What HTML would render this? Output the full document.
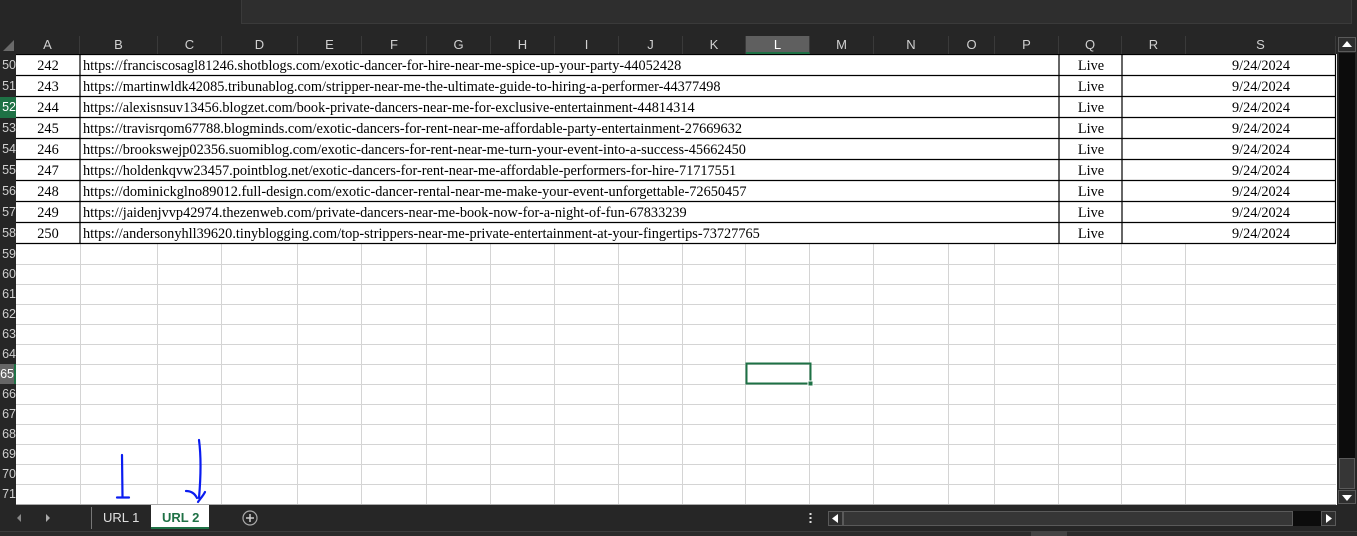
<!DOCTYPE html>
<html><head><meta charset="utf-8"><style>
*{margin:0;padding:0;box-sizing:border-box}
body{width:1357px;height:536px;background:#262626;position:relative;overflow:hidden;font-family:"Liberation Sans",sans-serif}
.a{position:absolute}
.ch{position:absolute;top:36px;height:18px;color:#d0d0d0;font-size:13px;text-align:center;line-height:18px;border-right:1px solid #3a3a3a}
.rh{position:absolute;left:0;width:16px;color:#d0d0d0;font-size:12.5px;text-align:right;overflow:hidden;white-space:nowrap;height:20px;line-height:20px}
.r2{height:21px;line-height:21px}
.d{position:absolute;font-family:"Liberation Serif",serif;font-size:14.3px;color:#000;white-space:nowrap;line-height:21px;height:21px}
.n{left:16px;width:64px;text-align:center}
.u{left:83px}
.q{left:1059px;width:64px;text-align:center}
.s{left:1186px;width:150px;text-align:center}
</style></head><body>
<div class="a" style="left:241px;top:0;width:1111px;height:24px;background:#2e2e2e;border:1px solid #3a3a3a;border-top:none"></div>
<svg class="a" style="left:2px;top:40px" width="14" height="12"><polygon points="12,0 12,11 1,11" fill="#6a6a6a"/></svg>
<div class="ch" style="left:16px;width:64px">A</div>
<div class="ch" style="left:80px;width:78px">B</div>
<div class="ch" style="left:158px;width:64px">C</div>
<div class="ch" style="left:222px;width:76px">D</div>
<div class="ch" style="left:298px;width:64px">E</div>
<div class="ch" style="left:362px;width:65px">F</div>
<div class="ch" style="left:427px;width:64px">G</div>
<div class="ch" style="left:491px;width:64px">H</div>
<div class="ch" style="left:555px;width:64px">I</div>
<div class="ch" style="left:619px;width:64px">J</div>
<div class="ch" style="left:683px;width:63px">K</div>
<div class="ch" style="left:746px;width:64px;background:#5f5f5f;color:#fff;border-bottom:2px solid #1e7145">L</div>
<div class="ch" style="left:810px;width:64px">M</div>
<div class="ch" style="left:874px;width:75px">N</div>
<div class="ch" style="left:949px;width:46px">O</div>
<div class="ch" style="left:995px;width:64px">P</div>
<div class="ch" style="left:1059px;width:63px">Q</div>
<div class="ch" style="left:1122px;width:64px">R</div>
<div class="ch" style="left:1186px;width:150px">S</div>

<svg class="a" style="left:16px;top:54px" width="1321" height="451">
<rect x="0" y="0" width="1321" height="451" fill="#fff"/>
<g stroke="#d4d4d4" stroke-width="1">
<line x1="0" y1="210.5" x2="1320" y2="210.5"/><line x1="0" y1="230.5" x2="1320" y2="230.5"/><line x1="0" y1="250.5" x2="1320" y2="250.5"/><line x1="0" y1="270.5" x2="1320" y2="270.5"/><line x1="0" y1="290.5" x2="1320" y2="290.5"/><line x1="0" y1="310.5" x2="1320" y2="310.5"/><line x1="0" y1="330.5" x2="1320" y2="330.5"/><line x1="0" y1="350.5" x2="1320" y2="350.5"/><line x1="0" y1="370.5" x2="1320" y2="370.5"/><line x1="0" y1="390.5" x2="1320" y2="390.5"/><line x1="0" y1="410.5" x2="1320" y2="410.5"/><line x1="0" y1="430.5" x2="1320" y2="430.5"/>
<line x1="64.5" y1="190" x2="64.5" y2="450"/><line x1="141.5" y1="0" x2="141.5" y2="450"/><line x1="205.5" y1="0" x2="205.5" y2="450"/><line x1="281.5" y1="0" x2="281.5" y2="450"/><line x1="345.5" y1="0" x2="345.5" y2="450"/><line x1="410.5" y1="0" x2="410.5" y2="450"/><line x1="474.5" y1="0" x2="474.5" y2="450"/><line x1="538.5" y1="0" x2="538.5" y2="450"/><line x1="602.5" y1="0" x2="602.5" y2="450"/><line x1="666.5" y1="0" x2="666.5" y2="450"/><line x1="729.5" y1="0" x2="729.5" y2="450"/><line x1="793.5" y1="0" x2="793.5" y2="450"/><line x1="857.5" y1="0" x2="857.5" y2="450"/><line x1="932.5" y1="0" x2="932.5" y2="450"/><line x1="978.5" y1="0" x2="978.5" y2="450"/><line x1="1042.5" y1="190" x2="1042.5" y2="450"/><line x1="1105.5" y1="190" x2="1105.5" y2="450"/><line x1="1169.5" y1="0" x2="1169.5" y2="450"/>
<line x1="0" y1="450.5" x2="1320" y2="450.5" stroke="#aaa"/>
</g>
<rect x="0" y="0" width="1320" height="190" fill="#fff"/>
<g stroke="#000" stroke-width="1.2">
<line x1="0" y1="0.5" x2="1320" y2="0.5"/><line x1="0" y1="21.5" x2="1320" y2="21.5"/><line x1="0" y1="42.5" x2="1320" y2="42.5"/><line x1="0" y1="63.5" x2="1320" y2="63.5"/><line x1="0" y1="84.5" x2="1320" y2="84.5"/><line x1="0" y1="105.5" x2="1320" y2="105.5"/><line x1="0" y1="126.5" x2="1320" y2="126.5"/><line x1="0" y1="147.5" x2="1320" y2="147.5"/><line x1="0" y1="168.5" x2="1320" y2="168.5"/><line x1="0" y1="189.5" x2="1320" y2="189.5"/>
<line x1="64" y1="0" x2="64" y2="190"/><line x1="1043" y1="0" x2="1043" y2="190"/><line x1="1106" y1="0" x2="1106" y2="190"/><line x1="1319.5" y1="0" x2="1319.5" y2="190"/>
</g>
<rect x="730.5" y="309.5" width="64" height="20" fill="none" stroke="#1e7145" stroke-width="2"/>
<rect x="792" y="327" width="5" height="5" fill="#1e7145" stroke="#fff" stroke-width="1"/>
</svg>

<div class="rh r2" style="top:55px">50</div>
<div class="rh r2" style="top:76px">51</div>
<div class="rh r2" style="top:97px;background:#1e7145;color:#fff">52</div>
<div class="rh r2" style="top:118px">53</div>
<div class="rh r2" style="top:139px">54</div>
<div class="rh r2" style="top:160px">55</div>
<div class="rh r2" style="top:181px">56</div>
<div class="rh r2" style="top:202px">57</div>
<div class="rh r2" style="top:223px">58</div>
<div class="rh" style="top:244px">59</div>
<div class="rh" style="top:264px">60</div>
<div class="rh" style="top:284px">61</div>
<div class="rh" style="top:304px">62</div>
<div class="rh" style="top:324px">63</div>
<div class="rh" style="top:344px">64</div>
<div class="rh" style="top:364px;background:#666;color:#fff;border-right:2px solid #1e7145">65</div>
<div class="rh" style="top:384px">66</div>
<div class="rh" style="top:404px">67</div>
<div class="rh" style="top:424px">68</div>
<div class="rh" style="top:444px">69</div>
<div class="rh" style="top:464px">70</div>
<div class="rh" style="top:484px">71</div>

<div class="d n" style="top:56px">242</div><div class="d u" style="top:56px">https://franciscosagl81246.shotblogs.com/exotic-dancer-for-hire-near-me-spice-up-your-party-44052428</div><div class="d q" style="top:56px">Live</div><div class="d s" style="top:56px">9/24/2024</div>
<div class="d n" style="top:77px">243</div><div class="d u" style="top:77px">https://martinwldk42085.tribunablog.com/stripper-near-me-the-ultimate-guide-to-hiring-a-performer-44377498</div><div class="d q" style="top:77px">Live</div><div class="d s" style="top:77px">9/24/2024</div>
<div class="d n" style="top:98px">244</div><div class="d u" style="top:98px">https://alexisnsuv13456.blogzet.com/book-private-dancers-near-me-for-exclusive-entertainment-44814314</div><div class="d q" style="top:98px">Live</div><div class="d s" style="top:98px">9/24/2024</div>
<div class="d n" style="top:119px">245</div><div class="d u" style="top:119px">https://travisrqom67788.blogminds.com/exotic-dancers-for-rent-near-me-affordable-party-entertainment-27669632</div><div class="d q" style="top:119px">Live</div><div class="d s" style="top:119px">9/24/2024</div>
<div class="d n" style="top:140px">246</div><div class="d u" style="top:140px">https://brookswejp02356.suomiblog.com/exotic-dancers-for-rent-near-me-turn-your-event-into-a-success-45662450</div><div class="d q" style="top:140px">Live</div><div class="d s" style="top:140px">9/24/2024</div>
<div class="d n" style="top:161px">247</div><div class="d u" style="top:161px">https://holdenkqvw23457.pointblog.net/exotic-dancers-for-rent-near-me-affordable-performers-for-hire-71717551</div><div class="d q" style="top:161px">Live</div><div class="d s" style="top:161px">9/24/2024</div>
<div class="d n" style="top:182px">248</div><div class="d u" style="top:182px">https://dominickglno89012.full-design.com/exotic-dancer-rental-near-me-make-your-event-unforgettable-72650457</div><div class="d q" style="top:182px">Live</div><div class="d s" style="top:182px">9/24/2024</div>
<div class="d n" style="top:203px">249</div><div class="d u" style="top:203px">https://jaidenjvvp42974.thezenweb.com/private-dancers-near-me-book-now-for-a-night-of-fun-67833239</div><div class="d q" style="top:203px">Live</div><div class="d s" style="top:203px">9/24/2024</div>
<div class="d n" style="top:224px">250</div><div class="d u" style="top:224px">https://andersonyhll39620.tinyblogging.com/top-strippers-near-me-private-entertainment-at-your-fingertips-73727765</div><div class="d q" style="top:224px">Live</div><div class="d s" style="top:224px">9/24/2024</div>

<div class="a" style="left:1337px;top:36px;width:20px;height:468px;background:#262626"></div>
<div class="a" style="left:1338px;top:37px;width:18px;height:15px;border:1px solid #5a5a5a;background:#2e2e2e"></div>
<svg class="a" style="left:1342px;top:41px" width="10" height="6"><polygon points="5,0 10,6 0,6" fill="#fff"/></svg>
<div class="a" style="left:1339px;top:53px;width:16px;height:405px;background:#0c0c0c"></div>
<div class="a" style="left:1339px;top:458px;width:16px;height:31px;background:#363636;border:1px solid #5a5a5a"></div>
<div class="a" style="left:1338px;top:490px;width:18px;height:14px;border:1px solid #5a5a5a;background:#2e2e2e"></div>
<svg class="a" style="left:1342px;top:495px" width="10" height="6"><polygon points="0,0 10,0 5,6" fill="#fff"/></svg>

<div class="a" style="left:0;top:505px;width:1357px;height:26px;background:#262626"></div>
<div class="a" style="left:0;top:531px;width:1357px;height:5px;background:#2b2b2b;border-top:1px solid #3c3c3c"></div>
<svg class="a" style="left:17px;top:513px" width="40" height="10"><polygon points="4,1 4,9 0,5" fill="#888"/><polygon points="29,1 29,9 33,5" fill="#aaa"/></svg>
<div class="a" style="left:91px;top:507px;width:1px;height:22px;background:#777"></div>
<div class="a" style="left:103px;top:510px;color:#e0e0e0;font-size:13px">URL 1</div>
<div class="a" style="left:151px;top:505px;width:58px;height:24px;background:#fff;border-bottom:2px solid #1e7145"></div>
<div class="a" style="left:162px;top:510px;color:#1e7145;font-size:13px;font-weight:bold">URL 2</div>
<svg class="a" style="left:242px;top:510px" width="16" height="16"><circle cx="8" cy="8" r="7" fill="none" stroke="#aaa" stroke-width="1.2"/><path d="M4 8H12M8 4V12" stroke="#ccc" stroke-width="1.5"/></svg>
<svg class="a" style="left:809px;top:513px" width="4" height="12"><rect x="0.5" y="0" width="2" height="2" fill="#ddd"/><rect x="0.5" y="4" width="2" height="2" fill="#ddd"/><rect x="0.5" y="8" width="2" height="2" fill="#ddd"/></svg>
<div class="a" style="left:828px;top:511px;width:15px;height:15px;border:1px solid #5a5a5a;background:#2e2e2e"></div>
<svg class="a" style="left:832px;top:514px" width="6" height="9"><polygon points="6,0 6,9 0,4.5" fill="#fff"/></svg>
<div class="a" style="left:843px;top:511px;width:450px;height:15px;border:1px solid #5a5a5a;background:#363636"></div>
<div class="a" style="left:1293px;top:511px;width:28px;height:15px;background:#0c0c0c"></div>
<div class="a" style="left:1321px;top:511px;width:15px;height:15px;border:1px solid #5a5a5a;background:#2e2e2e"></div>
<svg class="a" style="left:1326px;top:514px" width="6" height="9"><polygon points="0,0 0,9 6,4.5" fill="#fff"/></svg>
<div class="a" style="left:1031px;top:531px;width:36px;height:5px;background:#444"></div>

<svg class="a" style="left:0;top:0" width="1357" height="536">
<g stroke="#0a1cf0" stroke-width="2.2" fill="none" stroke-linecap="round" stroke-linejoin="round">
<path d="M122 455 L122.5 497 M117 497.5 L129 497.5"/>
<path d="M199 440 C201 455 201 475 199 498 M186 491 C192 491 195 494 197 498 M205 492 C203 496 200 499 198 502"/>
</g></svg>
</body></html>
